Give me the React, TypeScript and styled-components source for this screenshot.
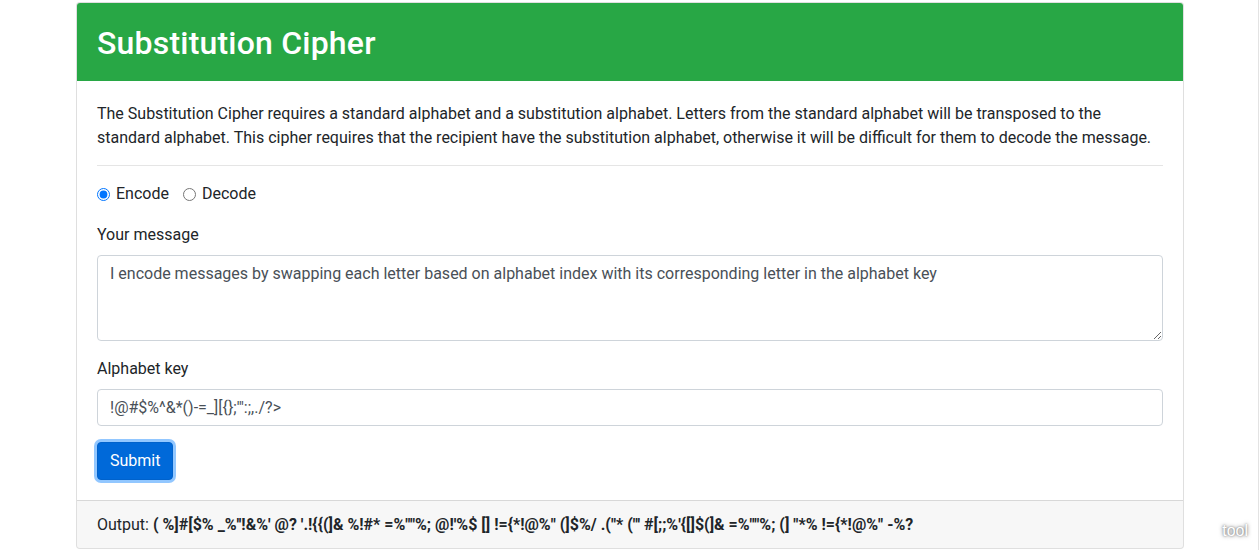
import React, { useState } from "react";
import styled, { createGlobalStyle } from "styled-components";

const GlobalStyle = createGlobalStyle`
  html, body { margin: 0; padding: 0; background: #fff; }
  body {
    font-family: Roboto, "Segoe UI", "Liberation Sans", sans-serif;
    font-size: 16px;
    line-height: 1.5;
    color: #212529;
  }
  *, *::before, *::after { box-sizing: border-box; }
`;

const Page = styled.div`
  position: relative;
  width: 1259px;
  height: 550px;
  border-right: 1px solid #e3e3e3;
  padding: 2px 0 0 76px;
  overflow: hidden;
`;

const Card = styled.div`
  width: 1108px;
  border: 1px solid rgba(0, 0, 0, 0.125);
  border-radius: 4px;
  background: #fff;
  overflow: hidden;
`;

const Header = styled.div`
  height: 78px;
  background: #28a745;
  display: flex;
  align-items: center;
  padding: 2px 20px 0;
`;

const Title = styled.h2`
  margin: 0;
  color: #fff;
  font-size: 32px;
  font-weight: 500;
  line-height: 1.2;
  letter-spacing: 0.2px;
`;

const Body = styled.div`
  padding: 21px 20px 20px;
`;

const Intro = styled.p`
  margin: 0 0 15px;
`;

const Rule = styled.hr`
  margin: 0 0 16px;
  border: 0;
  border-top: 1px solid rgba(0, 0, 0, 0.1);
`;

const RadioRow = styled.div`
  display: flex;
  align-items: center;
  margin-bottom: 17px;
`;

const RadioLabel = styled.label`
  display: inline-flex;
  align-items: center;
  margin-right: 14px;
  input {
    margin: 0 6px 0 0;
    width: 13px;
    height: 13px;
  }
`;

const Group = styled.div`
  margin-bottom: 16px;
`;

const FieldLabel = styled.label`
  display: block;
  margin-bottom: 8px;
`;

const controlStyles = `
  display: block;
  width: 100%;
  padding: 6px 12px;
  font-family: inherit;
  font-size: 16px;
  line-height: 1.5;
  color: #495057;
  background: #fff;
  border: 1px solid #ced4da;
  border-radius: 4px;
  outline: none;
`;

const TextArea = styled.textarea`
  ${controlStyles}
  height: 86px;
  resize: vertical;
`;

const TextInput = styled.input`
  ${controlStyles}
  height: 37px;
`;

const SubmitButton = styled.button`
  display: inline-block;
  font-family: inherit;
  font-size: 16px;
  line-height: 1.5;
  padding: 6px 12px;
  color: #fff;
  background: #0069d9;
  border: 1px solid #0062cc;
  border-radius: 4px;
  box-shadow: 0 0 0 3px rgba(38, 143, 255, 0.5);
  cursor: pointer;
`;

const Footer = styled.div`
  padding: 12px 20px 11px;
  background: rgba(0, 0, 0, 0.03);
  border-top: 1px solid rgba(0, 0, 0, 0.125);
`;

const OutputValue = styled.b`
  font-weight: 700;
`;

const Watermark = styled.span`
  position: absolute;
  right: 10px;
  bottom: 10px;
  font-family: "Liberation Sans", Arial, sans-serif;
  font-size: 16px;
  line-height: 18px;
  color: #fff;
  text-shadow: 0 0 4px rgba(0, 0, 0, 0.55), 0 0 2px rgba(0, 0, 0, 0.4);
`;

const KEY = "!@#$%^&*()-=_][{};'\":;,./?>";
const OUTPUT =
  "( %]#[$% _%''!&%' @? '.!{{(]& %!#* =%\"\"%; @!'%$ [] !={*!@%\" (]$%/ .(\"* (\"' #[;;%'{[]$(]& =%\"\"%; (] \"*% !={*!@%\" -%?";

export default function App() {
  const [mode, setMode] = useState("encode");
  const [message, setMessage] = useState(
    "I encode messages by swapping each letter based on alphabet index with its corresponding letter in the alphabet key"
  );
  const [key, setKey] = useState(KEY);

  return (
    <>
      <GlobalStyle />
      <Page>
        <Card>
          <Header>
            <Title>Substitution Cipher</Title>
          </Header>
          <Body>
            <Intro>
              The Substitution Cipher requires a standard alphabet and a substitution alphabet. Letters from the
              standard alphabet will be transposed to the standard alphabet. This cipher requires that the
              recipient have the substitution alphabet, otherwise it will be difficult for them to decode the
              message.
            </Intro>
            <Rule />
            <RadioRow>
              <RadioLabel>
                <input
                  type="radio"
                  name="mode"
                  checked={mode === "encode"}
                  onChange={() => setMode("encode")}
                />
                Encode
              </RadioLabel>
              <RadioLabel>
                <input
                  type="radio"
                  name="mode"
                  checked={mode === "decode"}
                  onChange={() => setMode("decode")}
                />
                Decode
              </RadioLabel>
            </RadioRow>
            <Group>
              <FieldLabel>Your message</FieldLabel>
              <TextArea value={message} onChange={(e) => setMessage(e.target.value)} />
            </Group>
            <Group>
              <FieldLabel>Alphabet key</FieldLabel>
              <TextInput value={key} onChange={(e) => setKey(e.target.value)} />
            </Group>
            <SubmitButton type="button">Submit</SubmitButton>
          </Body>
          <Footer>
            Output: <OutputValue>{OUTPUT}</OutputValue>
          </Footer>
        </Card>
        <Watermark>tool</Watermark>
      </Page>
    </>
  );
}
